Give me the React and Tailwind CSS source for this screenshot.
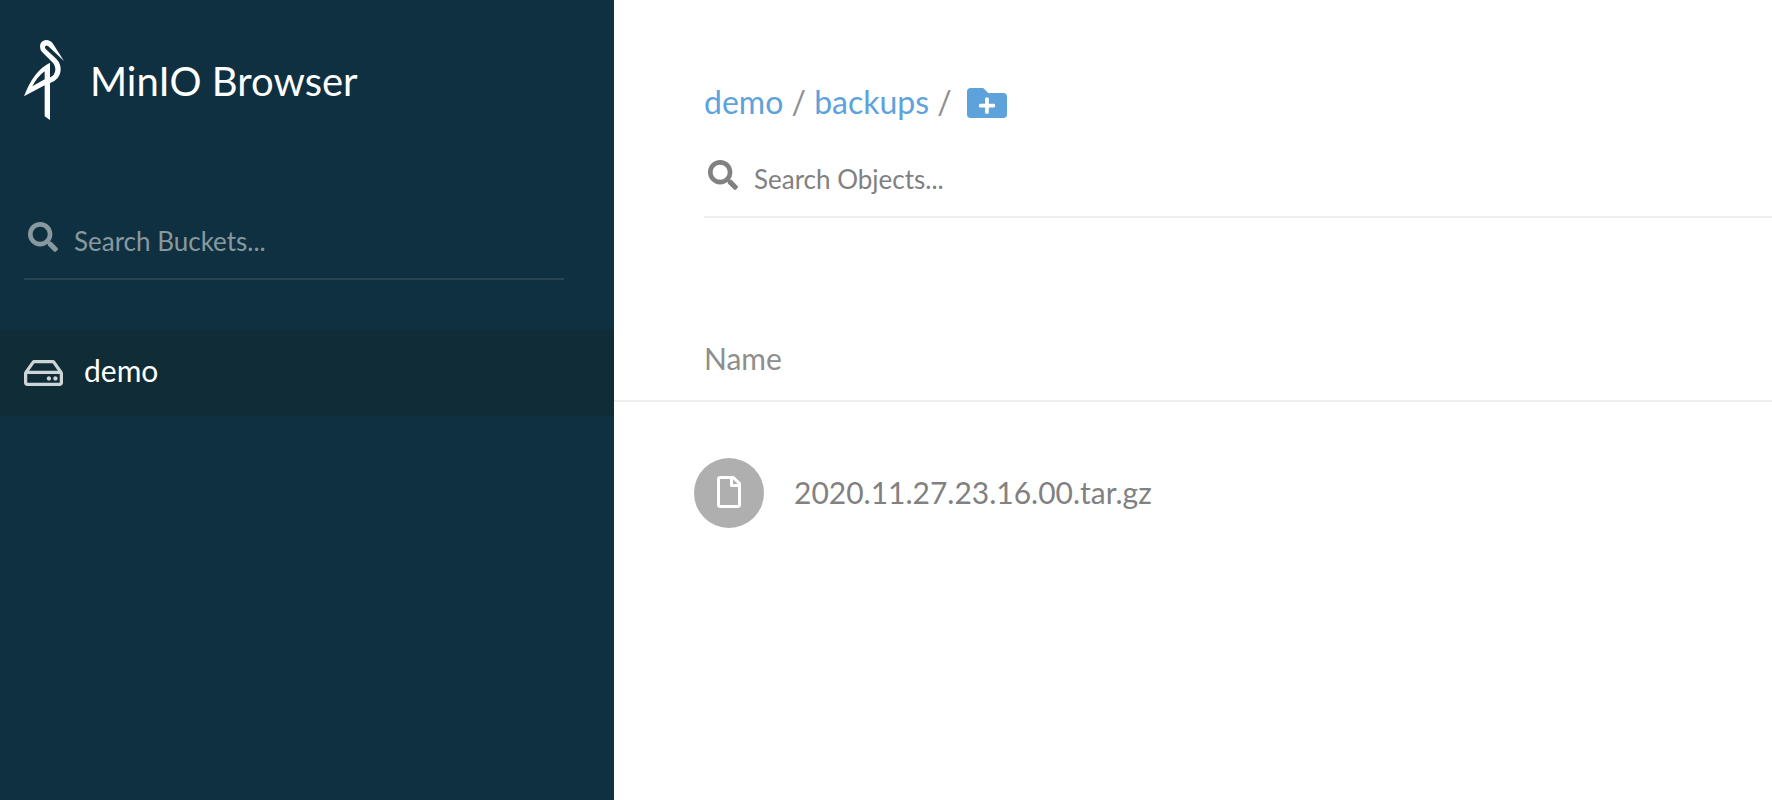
import { useState } from 'react';
import { FaFolderPlus, FaRegFile, FaRegHdd, FaSearch } from 'react-icons/fa';

const BUCKETS = ['demo'];
const CRUMBS = ['demo', 'backups'];
const OBJECTS = ['2020.11.27.23.16.00.tar.gz'];

function Logo() {
  return (
    <svg viewBox="42 29 120 240" className="h-20 w-10 shrink-0" fill="#fff" aria-hidden="true">
      <path d="M162 92L129 40Q121 29 108 29Q90 31 90 49Q90 58 97 66L127 96Q136 105 136 119Q135 135 119 142V159Q151 147 152 120Q153 101 140 87L107 56Q103 51 106 47Q110 43 115 48Z" />
      <path fillRule="evenodd" d="M119 98Q71 121 42 198L104 165V258L120 269V98ZM104 123Q82 139 67 168L104 147Z" />
    </svg>
  );
}

function SearchField({ id, label, className, value, onChange }) {
  return (
    <div className={`flex h-[70px] border-b-2 pl-1 ${className}`}>
      <label htmlFor={id} aria-label={label} className="pt-3">
        <FaSearch className="size-[30px]" />
      </label>
      <input
        id={id}
        type="text"
        value={value}
        onChange={(e) => onChange(e.target.value)}
        placeholder={label}
        className="ml-4 h-[62px] min-w-0 flex-1 bg-transparent text-[26px] placeholder-current outline-none"
      />
    </div>
  );
}

function Sidebar() {
  const [query, setQuery] = useState('');
  const [active, setActive] = useState('demo');
  const buckets = BUCKETS.filter((b) => b.includes(query));

  return (
    <aside className="w-[614px] shrink-0 bg-[#0f3040] text-white">
      <div className="flex items-center px-6 pt-10">
        <Logo />
        <h1 className="pt-0.5 pl-[26px] text-[40px] leading-[48px]">MinIO Browser</h1>
      </div>
      <div className="pt-[90px] pr-[50px] pl-6">
        <SearchField
          id="bucket-search"
          label="Search Buckets..."
          value={query}
          onChange={setQuery}
          className="border-[#284551] text-[#88989f]"
        />
      </div>
      <nav className="pt-[50px]">
        {buckets.map((name) => (
          <button
            key={name}
            type="button"
            onClick={() => setActive(name)}
            className={`flex h-[86px] w-full items-center gap-[21px] px-6 text-left text-[30px] ${
              active === name ? 'bg-[#0f2c37]' : ''
            }`}
          >
            <FaRegHdd className="h-9 w-[39px] text-[#cfd5d7]" />
            <span className="pb-1.5">{name}</span>
          </button>
        ))}
      </nav>
    </aside>
  );
}

export default function App() {
  const [query, setQuery] = useState('');
  const objects = OBJECTS.filter((o) => o.includes(query));

  return (
    <div className="flex min-h-screen bg-white font-['Lato',sans-serif]">
      <Sidebar />
      <main className="min-w-0 flex-1">
        <header className="pt-20 pl-[90px]">
          <div className="flex h-[46px] items-center text-[32px] text-[#8e8e8e]">
            {CRUMBS.map((c) => (
              <span key={c} className="pb-0.5 whitespace-pre">
                <a href={`#${c}`} className="text-[#5ea2dc]">{c}</a>
                {' / '}
              </span>
            ))}
            <button type="button" aria-label="Create new path" className="ml-[7px] text-[#5ea2dc]">
              <FaFolderPlus className="size-10" />
            </button>
          </div>
          <div className="pt-[22px]">
            <SearchField
              id="object-search"
              label="Search Objects..."
              value={query}
              onChange={setQuery}
              className="border-[#eee] text-[#818181]"
            />
          </div>
        </header>
        <table className="mt-[101px] w-full text-left text-[30px]">
          <thead>
            <tr className="border-b-2 border-[#eee] text-[#8e8e8e]">
              <th scope="col" className="h-[82px] pb-0.5 pl-[90px] font-normal">Name</th>
            </tr>
          </thead>
          <tbody className="text-[#818181]">
            {objects.map((name) => (
              <tr key={name}>
                <td className="pt-14 pl-20">
                  <div className="flex items-center gap-[30px]">
                    <span className="flex size-[70px] items-center justify-center rounded-full bg-[#afafaf] pb-0.5 text-white">
                      <FaRegFile className="size-8" />
                    </span>
                    <span className="pb-0.5">{name}</span>
                  </div>
                </td>
              </tr>
            ))}
          </tbody>
        </table>
      </main>
    </div>
  );
}
